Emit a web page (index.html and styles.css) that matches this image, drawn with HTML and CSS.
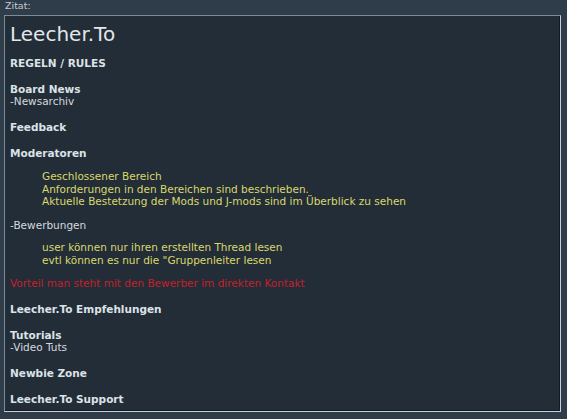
FILE: index.html
```html
<!DOCTYPE html>
<html>
<head>
<meta charset="utf-8">
<link rel="stylesheet" href="styles.css">
</head>
<body>
<div class="label">Zitat:</div>
<div class="quote">
  <div class="title">Leecher.To</div>
  <div class="para"><b>REGELN / RULES</b></div>
  <div class="para"><b>Board News</b><br>-Newsarchiv</div>
  <div class="para"><b>Feedback</b></div>
  <div class="para tight"><b>Moderatoren</b></div>
  <div class="indent first yellow">Geschlossener Bereich<br>Anforderungen in den Bereichen sind beschrieben.<br>Aktuelle Bestetzung der Mods und J-mods sind im Überblick zu sehen</div>
  <div class="plain">-Bewerbungen</div>
  <div class="indent second yellow">user können nur ihren erstellten Thread lesen<br>evtl können es nur die "Gruppenleiter lesen</div>
  <div class="para red">Vorteil man steht mit den Bewerber im direkten Kontakt</div>
  <div class="para"><b>Leecher.To Empfehlungen</b></div>
  <div class="para"><b>Tutorials</b><br>-Video Tuts</div>
  <div class="para"><b>Newbie Zone</b></div>
  <div class="para last"><b>Leecher.To Support</b></div>
</div>
</body>
</html>
```
FILE: styles.css
```css
html, body {
  margin: 0;
  padding: 0;
  background: #2f3d4a;
  font-family: "DejaVu Sans", Verdana, sans-serif;
  color: #d3d9df;
}
.label {
  font-size: 9.5px;
  line-height: 12px;
  height: 15px;
  padding-left: 5px;
  color: #c3cbd3;
}
.quote {
  margin-left: 4px;
  box-sizing: border-box;
  width: 557px;
  height: 397px;
  background: #232d37;
  border-top: 1px solid #7d8b98;
  border-left: 1px solid #7d8b98;
  border-right: 1px solid #c9d0d7;
  border-bottom: 1px solid #c9d0d7;
  box-shadow: inset -1px -1px 0 #121a22;
  padding: 0 0 0 5px;
  font-size: 10.5px;
  line-height: 12.5px;
}
.title {
  font-size: 20px;
  line-height: 24px;
  padding-top: 6px;
  margin-bottom: 11px;
  color: #e2e7ec;
}
.para {
  margin-bottom: 13.25px;
}
.para b {
  font-weight: bold;
  color: #dde2e7;
}
.tight {
  margin-bottom: 0;
}
.indent {
  margin-left: 32px;
}
.indent.first {
  margin-top: 11px;
  margin-bottom: 11.5px;
}
.indent.second {
  margin-top: 9.5px;
  margin-bottom: 11px;
}
.yellow { color: #d9d86c; }
.red { color: #c4202c; }
.last { margin-bottom: 0; }
```
